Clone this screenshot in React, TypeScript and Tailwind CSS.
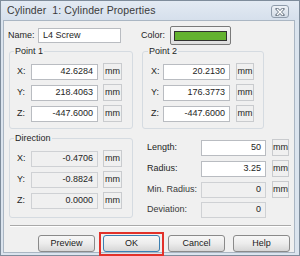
import React from 'react';

type Row = { label: string; value: string; unit?: boolean; disabled?: boolean };

const point1: Row[] = [
    { label: 'X:', value: '42.6284', unit: true },
    { label: 'Y:', value: '218.4063', unit: true },
    { label: 'Z:', value: '-447.6000', unit: true },
];

const point2: Row[] = [
    { label: 'X:', value: '20.2130', unit: true },
    { label: 'Y:', value: '176.3773', unit: true },
    { label: 'Z:', value: '-447.6000', unit: true },
];

const direction: Row[] = [
    { label: 'X:', value: '-0.4706', unit: true, disabled: true },
    { label: 'Y:', value: '-0.8824', unit: true, disabled: true },
    { label: 'Z:', value: '0.0000', unit: true, disabled: true },
];

const sizes: Row[] = [
    { label: 'Length:', value: '50', unit: true },
    { label: 'Radius:', value: '3.25', unit: true },
    { label: 'Min. Radius:', value: '0', unit: true, disabled: true },
    { label: 'Deviation:', value: '0', disabled: true },
];

function Field({ value, disabled, width }: { value: string; disabled?: boolean; width: string }) {
    return (
        <div
            className={`${width} h-[16px] flex items-center justify-end pr-[4px] border ${disabled
                ? 'bg-[#f0f0f0] border-[#cfd1d4]'
                : 'bg-white border-[#b9bcc1]'
                }`}
        >
            {value}
        </div>
    );
}

function Unit({ width }: { width: string }) {
    return (
        <div className={`${width} h-[17px] flex items-center justify-center border border-[#c9cbce] bg-[#f0f0f0]`}>
            mm
        </div>
    );
}

function Group({ title, rows, width, pad, labelW, unitW, unitGap }: {
    title: string;
    rows: Row[];
    width: string;
    pad: string;
    labelW: string;
    unitW: string;
    unitGap: string;
}) {
    return (
        <fieldset className={`${width} ${pad} border border-[#d5dbe1] rounded-[3px] pt-[6px] pb-[6px]`}>
            <legend className="ml-[-3px] px-[1px] leading-[11px] text-[#1e1e1e]">{title}</legend>
            <div className="flex flex-col gap-[4px]">
                {rows.map((r) => (
                    <div key={r.label} className="flex items-center">
                        <span className={labelW}>{r.label}</span>
                        <Field value={r.value} disabled={r.disabled} width="w-[67px]" />
                        <div className={unitGap}>
                            <Unit width={unitW} />
                        </div>
                    </div>
                ))}
            </div>
        </fieldset>
    );
}

function Button({ label, marked }: { label: string; marked?: boolean }) {
    return (
        <button
            className={`relative w-[57px] h-[17px] rounded-[3px] border text-[#1a1a1a] bg-gradient-to-b from-[#f7f7f7] via-[#ececec] to-[#d6d6d6] ${marked ? 'border-[#3c7fb1]' : 'border-[#8a8a8a]'
                }`}
        >
            {label}
            {marked && (
                <span className="absolute -left-[5px] -right-[5px] -top-[4px] -bottom-[5px] border-2 border-[#e2312a]" />
            )}
        </button>
    );
}

export default function App() {
    return (
        <div className="w-[300px] h-[256px] flex flex-col bg-[#dbe4ee] border border-[#7e8c9b] font-['Liberation_Sans',Arial,sans-serif] text-[9px] text-[#1e1e1e]">
            {/* title bar */}
            <div className="h-[19px] flex items-center justify-between pl-[6px] pr-[10px] bg-gradient-to-b from-[#e3eaf3] to-[#d6e0ec]">
                <span className="text-[10.5px] text-[#3a3a3a] tracking-[0.1px]">Cylinder&nbsp;&nbsp;1: Cylinder Properties</span>
                <div className="w-[18px] h-[13px] mt-[2px] flex items-center justify-center rounded-[3px] border border-[#8f9cab] bg-gradient-to-b from-[#eef2f7] to-[#d3dce7]">
                    <svg width="10" height="8" viewBox="0 0 10 8">
                        <path d="M2 1 L8 7 M8 1 L2 7" stroke="#6f7b88" strokeWidth="3" strokeLinecap="square" />
                        <path d="M2 1 L8 7 M8 1 L2 7" stroke="#ffffff" strokeWidth="1.4" />
                    </svg>
                </div>
            </div>

            {/* client area */}
            <div className="flex-1 ml-[2px] mr-[4px] mb-[2px] bg-[#f0f0f0] border border-[#aab6c3] pl-[4px] pr-[3px] pt-[5px] flex flex-col">
                {/* name / color */}
                <div className="flex items-center h-[19px]">
                    <span className="w-[30px]">Name:</span>
                    <div className="w-[83px] h-[15px] flex items-center pl-[4px] bg-white border border-[#b9bcc1]">L4 Screw</div>
                    <span className="ml-[20px] w-[29px]">Color:</span>
                    <div className="w-[61px] h-[19px] rounded-[2px] border border-[#7a7a7a] bg-gradient-to-b from-[#f4f4f4] to-[#dedede] pl-[3px] pr-[3px] pt-[4px] pb-[3px]">
                        <div className="w-full h-full bg-[#63b22f] border border-[#303030]" />
                    </div>
                </div>

                {/* points */}
                <div className="flex gap-[9px] mt-[1px] ml-[1px]">
                    <Group title="Point 1" rows={point1} width="w-[124px]" pad="pl-[7px]" labelW="w-[14px]" unitW="w-[19px]" unitGap="ml-[5px]" />
                    <Group title="Point 2" rows={point2} width="w-[122px]" pad="pl-[8px]" labelW="w-[12px]" unitW="w-[18px]" unitGap="ml-[6px]" />
                </div>

                {/* direction + sizes */}
                <div className="flex gap-[14px] mt-[4px] ml-[1px]">
                    <Group title="Direction" rows={direction} width="w-[124px]" pad="pl-[7px]" labelW="w-[14px]" unitW="w-[19px]" unitGap="ml-[5px]" />
                    <div className="flex flex-col gap-[4px] mt-[6px]">
                        {sizes.map((r) => (
                            <div key={r.label} className="flex items-center">
                                <span className={`w-[54px] ${r.disabled ? 'text-[#3a3a3a]' : ''}`}>{r.label}</span>
                                <Field value={r.value} disabled={r.disabled} width="w-[65px]" />
                                {r.unit && (
                                    <div className="ml-[6px]">
                                        <Unit width="w-[17px]" />
                                    </div>
                                )}
                            </div>
                        ))}
                    </div>
                </div>

                {/* separator */}
                <div className="mt-[7px] ml-[2px] h-[2px] border-t border-[#a9a9a9] border-b-white border-b" />

                {/* buttons */}
                <div className="flex justify-end gap-[8px] mt-[8px] pr-[1px]">
                    <Button label="Preview" />
                    <Button label="OK" marked />
                    <Button label="Cancel" />
                    <Button label="Help" />
                </div>
            </div>
        </div>
    );
}
